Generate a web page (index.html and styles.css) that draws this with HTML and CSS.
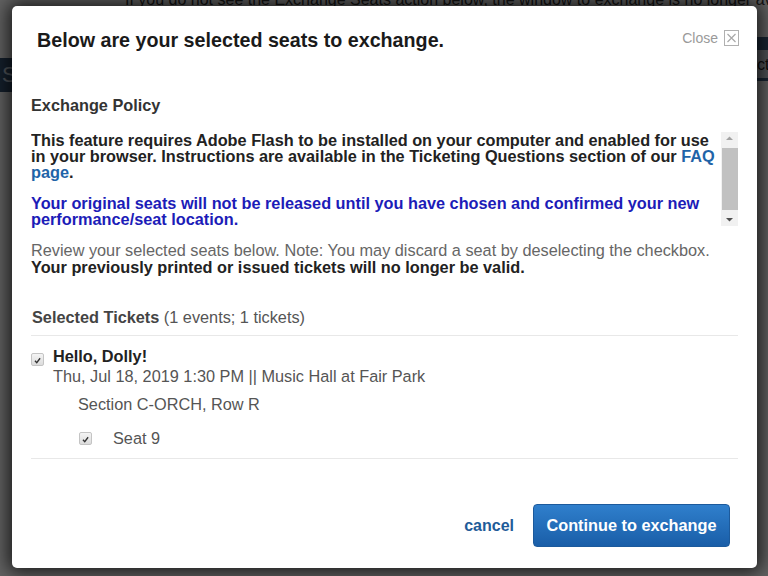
FILE: index.html
```html
<!DOCTYPE html>
<html>
<head>
<meta charset="utf-8">
<link rel="stylesheet" href="styles.css">
</head>
<body>
<div class="page">
  <p class="page-note">If you do not see the Exchange Seats action below, the window to exchange is no longer available.</p>
  <div class="page-band-left">S</div>
  <div class="page-band-right"></div>
  <div class="page-text-right">ct</div>
</div>
<div class="overlay"></div>
<div class="modal">
  <div class="modal-header">
    <h1 class="modal-title">Below are your selected seats to exchange.</h1>
    <a class="close">Close <span class="close-box"><svg width="15" height="16" viewBox="0 0 15 16"><rect x="0.5" y="0.5" width="14" height="15" fill="none" stroke="#b0b0b0"/><path d="M3.5 4 L11.5 12 M11.5 4 L3.5 12" stroke="#a8a8a8" stroke-width="1.2"/></svg></span></a>
  </div>
  <div class="modal-body">
    <h2 class="policy-title">Exchange Policy</h2>
    <div class="scroll">
      <div class="scroll-content">
        <p class="p-bold">This feature requires Adobe Flash to be installed on your computer and enabled for use in your browser. Instructions are available in the Ticketing Questions section of our <a class="link">FAQ page</a>.</p>
        <p class="p-blue">Your original seats will not be released until you have chosen and confirmed your new performance/seat location.</p>
      </div>
      <div class="scrollbar">
        <svg class="arrow" width="17" height="14" viewBox="0 0 17 14"><path d="M5 8 L8.5 4.5 L12 8 Z" fill="#a3a3a3"/></svg>
        <div class="thumb"></div>
        <svg class="arrow" width="17" height="14" viewBox="0 0 17 14"><path d="M5 6 L8.5 9.5 L12 6 Z" fill="#505050"/></svg>
      </div>
    </div>
    <p class="review">Review your selected seats below. Note: You may discard a seat by deselecting the checkbox.<br><strong>Your previously printed or issued tickets will no longer be valid.</strong></p>
    <h3 class="tickets-title">Selected Tickets <span class="count">(1 events; 1 tickets)</span></h3>
    <div class="event">
      <div class="event-row">
        <span class="cb"><svg width="13" height="13" viewBox="0 0 13 13"><path d="M3.5 6.8 L5.6 9 L9.6 3.8" fill="none" stroke="#333" stroke-width="1.6"/></svg></span>
        <div class="event-info">
          <div class="event-name">Hello, Dolly!</div>
          <div class="event-date">Thu, Jul 18, 2019 1:30 PM || Music Hall at Fair Park</div>
        </div>
      </div>
      <div class="section">Section C-ORCH, Row R</div>
      <div class="seat-row">
        <span class="cb"><svg width="13" height="13" viewBox="0 0 13 13"><path d="M3.5 6.8 L5.6 9 L9.6 3.8" fill="none" stroke="#333" stroke-width="1.6"/></svg></span>
        <span class="seat">Seat 9</span>
      </div>
    </div>
  </div>
  <div class="modal-footer">
    <a class="cancel">cancel</a>
    <button class="btn">Continue to exchange</button>
  </div>
</div>
</body>
</html>
```
FILE: styles.css
```css
html, body {
  margin: 0;
  padding: 0;
  width: 768px;
  height: 576px;
  overflow: hidden;
  font-family: "Liberation Sans", Arial, sans-serif;
}
.page {
  position: relative;
  width: 768px;
  height: 576px;
  background: #f4f4f4;
  overflow: hidden;
}
.page-note {
  position: absolute;
  left: 125px;
  top: -9px;
  margin: 0;
  font-size: 16px;
  color: #333;
  white-space: nowrap;
}
.page-band-left {
  position: absolute;
  left: 0;
  top: 58px;
  width: 40px;
  height: 34px;
  background: #35506e;
  color: #c8d4e0;
  font-size: 22px;
  line-height: 34px;
  padding-left: 2px;
}
.page-band-right {
  position: absolute;
  right: 0;
  top: 37px;
  width: 30px;
  height: 44px;
  background: #c8d0da;
  border-top: 13px solid #3f5e80;
  border-bottom: 3px solid #3f5e80;
  box-sizing: border-box;
}
.page-text-right {
  position: absolute;
  left: 757px;
  top: 56px;
  font-size: 16px;
  color: #222;
}
.overlay {
  position: absolute;
  inset: 0;
  background: rgba(0, 0, 0, 0.6);
}
.modal {
  position: absolute;
  left: 12px;
  top: 6px;
  width: 745px;
  height: 562px;
  background: #fff;
  border-radius: 5px;
  box-shadow: 0 0 18px 4px rgba(0, 0, 0, 0.75);
  display: flex;
  flex-direction: column;
  box-sizing: border-box;
}
.modal-header {
  display: flex;
  justify-content: space-between;
  align-items: flex-start;
  padding: 22px 18px 0 25px;
}
.modal-title {
  margin: 0;
  font-size: 19.7px;
  line-height: 24px;
  font-weight: bold;
  color: #1a1a1a;
}
.close {
  display: flex;
  align-items: center;
  gap: 6px;
  margin-top: 2px;
  font-size: 14px;
  color: #9a9a9a;
}
.close-box {
  display: flex;
}
.modal-body {
  padding: 0 19px;
  flex: 1;
}
.policy-title {
  margin: 44px 0 0;
  font-size: 16.3px;
  line-height: 18px;
  font-weight: bold;
  color: #333;
}
.scroll {
  margin-top: 18px;
  height: 96px;
  display: flex;
  gap: 4px;
}
.scroll-content {
  flex: 1;
  overflow: hidden;
}
.scroll-content p {
  margin: 0 0 15px;
  font-size: 16.3px;
  line-height: 16px;
  font-weight: bold;
}
.p-bold {
  color: #222;
}
.p-blue {
  color: #1c1cb8;
}
.link {
  color: #1f64a8;
}
.scrollbar {
  width: 17px;
  height: 94px;
  background: #f1f1f1;
  display: flex;
  flex-direction: column;
  align-items: center;
}
.arrow {
  flex: none;
}
.thumb {
  flex: 1;
  width: 16px;
  margin: 2px 0;
  background: #c1c1c1;
}
.review {
  margin: 14px 0 0;
  font-size: 16.3px;
  line-height: 17px;
  color: #666;
}
.review strong {
  color: #222;
}
.tickets-title {
  margin: 32px 0 0;
  font-size: 16.3px;
  line-height: 18px;
  font-weight: bold;
  color: #444;
  padding-bottom: 9px;
  border-bottom: 1px solid #e8e8e8;
  padding-left: 1px;
}
.count {
  font-weight: normal;
  color: #555;
}
.event {
  padding: 10px 0 10px;
  border-bottom: 1px solid #e8e8e8;
  font-size: 16.3px;
  color: #555;
}
.event-row {
  display: flex;
  gap: 9px;
  align-items: flex-start;
}
.cb {
  display: flex;
  width: 13px;
  height: 13px;
  border: 1px solid #c4c4c4;
  border-radius: 2px;
  background: linear-gradient(#f4f4f4, #dcdcdc);
  box-sizing: border-box;
  flex: none;
}
.event-row .cb {
  margin-top: 7px;
}
.event-name {
  font-weight: bold;
  color: #222;
  line-height: 20px;
}
.event-date {
  line-height: 21px;
}
.section {
  margin: 7px 0 0 47px;
  line-height: 20px;
}
.seat-row {
  display: flex;
  align-items: center;
  gap: 21px;
  margin: 14px 0 0 48px;
  line-height: 20px;
}
.modal-footer {
  display: flex;
  justify-content: flex-end;
  align-items: center;
  gap: 19px;
  padding: 0 27px 21px 0;
}
.cancel {
  font-size: 16px;
  font-weight: bold;
  color: #1f5c99;
}
.btn {
  width: 197px;
  height: 43px;
  border: 1px solid #1c5a9c;
  border-radius: 4px;
  background: linear-gradient(#2f7fcc, #1a5ea8);
  color: #fff;
  font-family: "Liberation Sans", Arial, sans-serif;
  font-size: 16.3px;
  font-weight: bold;
  padding: 0;
}
```
